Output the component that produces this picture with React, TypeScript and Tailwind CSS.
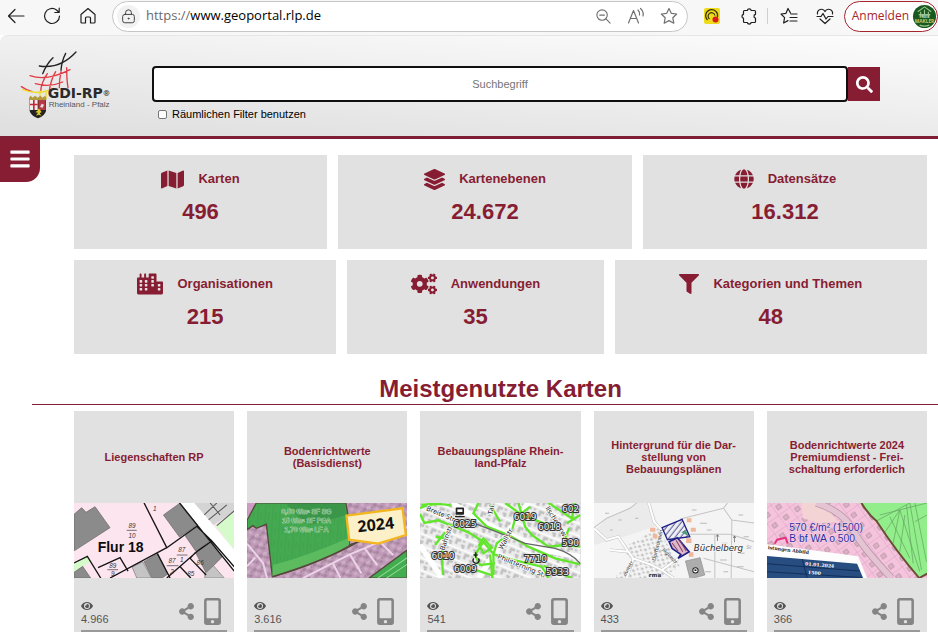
import React from 'react';
import {
  FaBars,
  FaCity,
  FaCogs,
  FaEye,
  FaFilter,
  FaGlobe,
  FaLayerGroup,
  FaMap,
  FaMobileAlt,
  FaSearch,
  FaShareAlt,
} from 'react-icons/fa';

interface Stat {
  label: string;
  value: string;
  icon: React.ReactNode;
  grow: string;
}

interface MapCardProps {
  title: React.ReactNode;
  views: string;
  preview: React.ReactNode;
}

const statRows: Stat[][] = [
  [
    { label: 'Karten', value: '496', icon: <FaMap size={23} />, grow: 'flex-[253]' },
    { label: 'Kartenebenen', value: '24.672', icon: <FaLayerGroup size={21} />, grow: 'flex-[294]' },
    { label: 'Datensätze', value: '16.312', icon: <FaGlobe size={20} />, grow: 'flex-[284]' },
  ],
  [
    { label: 'Organisationen', value: '215', icon: <FaCity size={26} />, grow: 'flex-[262]' },
    { label: 'Anwendungen', value: '35', icon: <FaCogs size={26} />, grow: 'flex-[256]' },
    { label: 'Kategorien und Themen', value: '48', icon: <FaFilter size={20} />, grow: 'flex-[312]' },
  ],
];

const ToolIcon: React.FC<{ children: React.ReactNode; size?: number }> = ({ children, size = 18 }) => (
  <svg
    width={size}
    height={size}
    viewBox="0 0 18 18"
    fill="none"
    stroke="currentColor"
    strokeWidth="1.2"
    strokeLinecap="round"
    strokeLinejoin="round"
  >
    {children}
  </svg>
);

const Avatar = () => (
  <svg width="25" height="25" viewBox="0 0 26 26" className="shrink-0">
    <circle cx="13" cy="13" r="12" fill="#17591f" />
    <path
      d="M6 8 L13 3 L20 8 M7 11 H19 M9 8 V11 M13 6 V11 M17 8 V11 M8 22 Q13 24 18 22"
      stroke="#9cc58e"
      strokeWidth="1.2"
      fill="none"
    />
    <text x="13" y="15" fontSize="4" fontWeight="bold" textAnchor="middle" fill="#d5e5c4">
      FREIE
    </text>
    <text x="13" y="20" fontSize="5" fontWeight="bold" textAnchor="middle" fill="#c8c86a">
      MAKLER
    </text>
  </svg>
);

const BrowserBar = () => (
  <div className="flex h-[35px] items-center bg-[#f7f7f7] pb-[3px] pl-[7px] font-['Open_Sans',sans-serif] text-[#1f1f1f]">
    <div className="flex items-center gap-[18px]">
      <button aria-label="Zurück">
        <ToolIcon>
          <path d="M17 9 H1.5 M8 2.5 L1.5 9 L8 15.5" />
        </ToolIcon>
      </button>
      <button aria-label="Aktualisieren">
        <ToolIcon>
          <path d="M16.5 9 A7.5 7.5 0 1 1 13.5 3 L16 5.3 M16.2 1.2 V5.5 H11.8" />
        </ToolIcon>
      </button>
      <button aria-label="Startseite">
        <ToolIcon>
          <path d="M2 7.5 L9 1.5 L16 7.5 V15 Q16 16 15 16 H11.5 V11 Q11.5 10 10.5 10 H7.5 Q6.5 10 6.5 11 V16 H3 Q2 16 2 15 Z" />
        </ToolIcon>
      </button>
    </div>
    <div className="ml-[15px] mr-4 flex h-[31px] flex-1 items-center rounded-full border border-[#c6c6c6] bg-white pl-1 pr-[9px]">
      <span className="flex size-[23px] items-center justify-center rounded-full bg-[#f2f2f2] text-[#444]">
        <ToolIcon size={15}>
          <rect x="2" y="6.5" width="14" height="10" rx="2.5" />
          <path d="M5.5 6.5 V4.5 A3.5 3.5 0 0 1 12.5 4.5 V6.5" />
          <circle cx="9" cy="11.5" r="0.6" fill="currentColor" />
        </ToolIcon>
      </span>
      <label htmlFor="address" className="ml-[6px] text-[13px] text-[#6b6b6b]">
        https://
      </label>
      <input id="address" className="min-w-0 flex-1 text-[13px] text-black outline-none" defaultValue="www.geoportal.rlp.de" />
      <div className="flex items-center gap-[15px] text-[#707070]">
        <button aria-label="Zoom">
          <ToolIcon size={17}>
            <circle cx="7.5" cy="7.5" r="5.5" />
            <path d="M11.6 11.6 L16 16 M5 7.5 H10" />
          </ToolIcon>
        </button>
        <button aria-label="Laut vorlesen">
          <ToolIcon>
            <path d="M1.5 16 L6.5 3.5 L11.5 16 M3.3 11.5 H9.7 M11 3 Q13 5 12.5 8 M13.5 1.5 Q17 4.5 16 9" />
          </ToolIcon>
        </button>
        <button aria-label="Favorit hinzufügen">
          <ToolIcon>
            <path d="M9 1.5 L11.3 6.3 L16.7 7 L12.8 10.8 L13.8 16.2 L9 13.6 L4.2 16.2 L5.2 10.8 L1.3 7 L6.7 6.3 Z" />
          </ToolIcon>
        </button>
      </div>
    </div>
    <button aria-label="Erweiterung">
      <svg width="16" height="16" viewBox="0 0 16 16">
        <rect width="16" height="16" rx="2" fill="#eedb1c" />
        <path
          d="M3.5 12 A6 6 0 1 1 13.5 9 M5.5 11 A3.5 3.5 0 1 1 11 7.5"
          stroke="#3d3510"
          strokeWidth="1.2"
          fill="none"
        />
        <circle cx="11.5" cy="11.5" r="3" fill="#d91b1b" />
      </svg>
    </button>
    <button aria-label="Erweiterungen" className="ml-5">
      <ToolIcon>
        <path d="M4.5 3.5 H7.3 A2 2 0 0 1 11.2 3.5 H14.5 Q15.5 3.5 15.5 4.5 V7.3 A2 2 0 0 0 15.5 11.2 V14.5 Q15.5 15.5 14.5 15.5 H11.2 A2 2 0 0 1 7.3 15.5 H4.5 Q3.5 15.5 3.5 14.5 V11.2 A2 2 0 0 1 3.5 7.3 V4.5 Q3.5 3.5 4.5 3.5 Z" />
      </ToolIcon>
    </button>
    <span className="ml-[9px] h-4 w-px bg-[#cfcfcf]" />
    <button aria-label="Favoriten" className="ml-3">
      <ToolIcon>
        <path d="M10.5 6 L8 1.5 L6 6.3 L1 7 L4.6 10.6 L3.6 16 L8 13.6 M11 7 H17 M10 10.5 H17 M10 14 H17" />
      </ToolIcon>
    </button>
    <button aria-label="Browser-Essentials" className="ml-[18px]">
      <ToolIcon>
        <path d="M1.5 7 A4 4 0 0 1 9 4.5 A4 4 0 0 1 16.5 7 M1 9.5 H5 L7 6.5 L10 12 L12 9.5 H17 M4 12 L9 16.5 L14 12" />
      </ToolIcon>
    </button>
    <button className="ml-[10px] flex h-[31px] items-center gap-[3px] rounded-full border border-[#a4262c] bg-white pl-[7px] text-xs text-[#a4262c]">
      Anmelden
      <Avatar />
    </button>
  </div>
);

const Logo = () => (
  <svg width="92" height="69" viewBox="30 20 276 207" className="shrink-0">
    <g fill="none" strokeWidth="4" strokeLinecap="round">
      <path d="M88 65 Q150 75 198 23" stroke="#222" />
      <path d="M129 40 Q110 58 98 88 M167 27 Q155 50 153 78" stroke="#222" />
      <path
        d="M60 94 Q110 112 180 76 M76 118 Q120 130 158 113 M34 127 Q50 138 66 142 M112 88 Q94 115 92 140 M137 82 Q123 105 118 138 M153 82 Q148 105 148 130 M170 70 Q170 105 174 130"
        stroke="#e23b45"
        strokeWidth="4"
      />
      <path d="M38 136 Q80 152 115 138 M90 140 V158 M108 140 V160" stroke="#f0dd28" />
    </g>
    <path d="M57 160 L62 154 L68 160 L75 154 L83 160 L91 154 L98 160 L105 154 L109 160 V167 H57 Z" fill="#b59b3a" />
    <path d="M59 167 H108 V200 Q104 215 84 222 Q63 215 59 200 Z" fill="#222" />
    <path d="M60 167 H83 V197 H60 Z" fill="#efefef" />
    <path d="M69 167 H74 V197 H69 Z M60 178 H83 V183 H60 Z" fill="#c52634" />
    <path d="M85 167 H107 V197 H85 Z" fill="#b63a45" />
    <path d="M90 188 L95 178 L102 181 L98 190 Z" fill="#ddd" />
    <path d="M78 214 L84 205 L76 204 L84 198 L82 192 L90 196 L95 204 L89 206 L94 214 L86 211 Z" fill="#dfca2e" />
    <text x="113" y="161" fontSize="42" fontWeight="bold" fill="#2b2a28" fontFamily="DejaVu Sans, sans-serif">
      GDI-RP
    </text>
    <text x="280" y="154" fontSize="23" fontWeight="bold" fill="#2b2a28" fontFamily="Noto Sans, sans-serif">
      ®
    </text>
    <text x="116" y="189" fontSize="24" fill="#55565a" fontFamily="Liberation Sans, sans-serif">
      Rheinland - Pfalz
    </text>
  </svg>
);

const Header = () => (
  <header className="flex h-[104px] rounded-tl-lg border-b-[3px] border-t border-b-[#7f1f36] border-t-[#e6e6e6] bg-[linear-gradient(184deg,#fdfdfd,#dedede)] pl-5 pr-[58px]">
    <div className="pt-[15px]">
      <Logo />
    </div>
    <form className="ml-10 flex-1 pt-[30px]">
      <div className="flex items-center">
        <input
          type="text"
          aria-label="Suchbegriff"
          placeholder="Suchbegriff"
          className="h-9 min-w-0 flex-1 rounded-sm border-2 border-[#101010] bg-white text-center text-[11px] outline-none placeholder:text-[#757575]"
        />
        <button type="button" aria-label="Suchen" className="flex h-[34px] w-8 items-center justify-center bg-[#871d33] text-white">
          <FaSearch size={17} />
        </button>
      </div>
      <label className="mt-1 flex items-center gap-[5px] pl-[6px] text-[11px] leading-4 text-black">
        <input type="checkbox" className="size-[9px] appearance-none rounded-xs border border-[#767676] bg-white" />
        Räumlichen Filter benutzen
      </label>
    </form>
  </header>
);

const StatTile: React.FC<Stat> = ({ label, value, icon, grow }) => (
  <a href="#" className={`${grow} h-[94px] bg-[#e1e1e1] pt-3 text-center font-bold text-[#871d33]`}>
    <span className="flex h-6 items-center justify-center gap-[14px] text-[13px]">
      {icon}
      {label}
    </span>
    <span className="mt-[7px] block text-[22px] leading-7">{value}</span>
  </a>
);

/* Cadastral parcels with buildings */
const ParcelMap = () => (
  <svg viewBox="12 24 480 225" preserveAspectRatio="xMidYMid slice" className="block h-[75px] w-full">
    <rect x="12" y="24" width="480" height="225" fill="#fde5ef" />
    <path d="M12 205 L52 184 L64 198 L12 232 Z M436 92 L492 50 V165 Z" fill="#d5fbcb" />
    <path d="M372 24 H492 V50 L430 90 Z" fill="#d4d4d4" />
    <path d="M400 62 L440 24 M415 75 L470 30 M440 92 L492 48 M420 24 L450 60" stroke="#555" strokeWidth="3" />
    <path d="M328 24 H372 L492 165 V228 Z" fill="#fff" />
    <g fill="#8b8b8b" stroke="#666" strokeWidth="2">
      <path d="M12 58 L35 38 L48 52 L75 35 L120 98 L15 166 H12 Z" />
      <path d="M280 60 L330 24 L382 90 L328 126 Z" />
      <path d="M345 122 L382 94 L418 138 L378 170 Z" />
      <path d="M376 172 L420 140 L456 186 L408 234 Z" />
      <path d="M222 200 L262 176 L292 238 L276 249 H246 Z" />
      <path d="M12 232 L38 214 L62 249 H12 Z" />
    </g>
    <path d="M186 216 L218 200 L244 249 H200 Z M404 236 L430 212 L462 249 H404 Z" fill="#c4c4c4" stroke="#777" strokeWidth="2" />
    <path
      d="M222 24 L290 158 L380 94 M120 249 L290 158 M328 24 L492 228 M12 204 L52 184 L92 249 M84 218 L150 188 L174 228 M262 176 L300 249 M290 249 L385 166 L425 138 M360 190 L408 240 M330 215 L362 249 M376 172 L360 190 M380 94 L425 138 L492 215"
      stroke="#161616"
      strokeWidth="4"
      fill="none"
    />
    <g fontFamily="Liberation Sans, sans-serif" fontStyle="italic" fontSize="19" fill="#333" textAnchor="middle">
      <text x="186" y="100">89</text>
      <text x="186" y="130">10</text>
      <text x="128" y="218">89</text>
      <text x="128" y="244">9</text>
      <text x="335" y="172">87</text>
      <text x="335" y="202">1</text>
      <text x="306" y="205">87</text>
      <text x="306" y="236">2</text>
      <text x="390" y="210">86</text>
      <text x="362" y="242">85</text>
      <text x="254" y="47">1</text>
      <path d="M170 106 H200 M112 224 H144 M320 180 H352 M290 212 H325" stroke="#333" strokeWidth="2" />
    </g>
    <text x="83" y="171" fontFamily="Liberation Sans, sans-serif" fontWeight="bold" fontSize="42" fill="#0c0c0c">
      Flur 18
    </text>
  </svg>
);

/* Aerial view with land value zones */
const LandValueMap = () => (
  <svg viewBox="12 24 480 225" preserveAspectRatio="xMidYMid slice" className="block h-[75px] w-full">
    <defs>
      <pattern id="roofs" width="34" height="30" patternUnits="userSpaceOnUse" patternTransform="rotate(-24)">
        <rect width="34" height="30" fill="#c09ab8" />
        <path d="M3 4 H14 V13 H3 Z M20 17 H30 V25 H20 Z" fill="#a884a0" />
        <path d="M17 3 H29 V11 H17 Z M4 18 H13 V27 H4 Z" fill="#cdaec6" />
        <path d="M15 14 H19 V19 H15 Z M30 8 H34 V14 H30 Z" fill="#958a93" />
      </pattern>
      <pattern id="meadow" width="22" height="40" patternUnits="userSpaceOnUse" patternTransform="rotate(4)">
        <rect width="22" height="40" fill="#44a950" />
        <path d="M5 0 V40 M15 8 V30" stroke="#40a24d" strokeWidth="3" />
      </pattern>
    </defs>
    <rect x="12" y="24" width="480" height="225" fill="url(#roofs)" />
    <path
      d="M40 24 H308 L318 80 L318 150 Q240 200 88 245 L76 140 L70 88 L40 100 L30 92 L12 104 V76 Z"
      fill="url(#meadow)"
      stroke="#57483c"
      strokeWidth="4"
    />
    <path d="M90 210 Q200 180 318 128 V150 Q240 200 88 245 Z" fill="#5cba5f" />
    <path d="M130 26 H304 L310 60 L200 90 L160 60 Z" fill="#358b46" opacity="0.6" />
    <path d="M12 24 H36 L14 62 Z" fill="#cd9cc2" />
    <path d="M378 249 L492 165 V249 Z" fill="#42ad50" stroke="#57483c" strokeWidth="4" />
    <path d="M404 249 L492 188 M430 249 L492 208" stroke="#97db95" strokeWidth="3" />
    <path
      d="M12 146 L60 204 L72 249 M36 188 L12 214 M180 249 L320 178 L420 136 L492 96 M320 178 L355 235 M365 160 L402 210 M410 140 L450 180 M270 206 L292 249"
      stroke="#ecd3e8"
      strokeWidth="6"
      fill="none"
    />
    <path d="M318 150 L360 136 M88 245 Q240 200 345 140" stroke="#57483c" strokeWidth="5" fill="none" />
    <g
      fontFamily="Liberation Sans, sans-serif"
      fontSize="20"
      fill="#3c9b4c"
      stroke="#cfe6cf"
      strokeWidth="2"
      paintOrder="stroke"
      textAnchor="middle"
    >
      <text x="190" y="58">0,50 €/m² SF SG</text>
      <text x="190" y="84">15 €/m² SF PGA</text>
      <text x="190" y="112">1,70 €/m² LF A</text>
    </g>
    <path d="M310 62 L478 40 L488 120 L405 146 L318 134 Z" fill="#fcf0c8" stroke="#f3b61f" strokeWidth="7" />
    <text
      x="398"
      y="106"
      transform="rotate(-6 398 92)"
      fontFamily="Open Sans, sans-serif"
      fontWeight="bold"
      fontSize="48"
      textAnchor="middle"
      fill="#111"
    >
      2024
    </text>
  </svg>
);

/* City plan with plan outlines in green */
const CityPlanMap = () => (
  <svg viewBox="15 24 480 225" preserveAspectRatio="xMidYMid slice" className="block h-[75px] w-full">
    <defs>
      <pattern id="blocks" width="40" height="34" patternUnits="userSpaceOnUse" patternTransform="rotate(22)">
        <rect width="40" height="34" fill="#ededed" />
        <path d="M4 4 H20 V12 H12 V22 H4 Z M24 16 H36 V29 H28 V23 H24 Z M25 4 H33 V10 H25 Z" fill="#c0c0c0" />
        <path d="M0 32 H40" stroke="#fff" strokeWidth="4" />
      </pattern>
    </defs>
    <rect x="15" y="24" width="480" height="225" fill="url(#blocks)" />
    <path d="M110 24 L240 100 L380 165 L495 185 M15 150 L80 249 M190 249 L300 80 L340 24" stroke="#fff" strokeWidth="16" fill="none" />
    <g fill="none" stroke="#62e62c" strokeWidth="7">
      <path d="M15 56 L28 84 L70 76 L120 96 L160 112 L205 140 L236 178 L300 196 L380 215 L400 249" />
      <path d="M20 30 L80 24 M190 24 L175 55 L215 95 L280 120 L340 155 L420 190 L495 208" />
      <path d="M310 24 L330 95 L350 120 L400 155 L450 150 L495 155 M235 178 L245 145 L290 110 L300 70 L345 35" />
      <path d="M62 125 L90 130 L80 180 L84 240 M60 150 L90 112 M205 140 L180 180 L195 210 L240 205 M235 178 V240 M150 215 L230 240" />
      <path d="M400 24 L470 70 L480 24 M455 85 L495 60 M225 30 L255 80 M462 100 L440 150 M385 212 L470 249" />
      <path d="M205 130 L230 158 L205 175 L192 150 Z M15 40 Q50 20 110 32 M270 24 L320 60 L400 90 M225 178 L232 249" />
    </g>
    <path d="M180 86 Q250 112 330 145 L420 160 Q470 175 495 205" stroke="#666" strokeWidth="4" fill="none" />
    <rect x="122" y="38" width="25" height="21" rx="3" fill="#222" />
    <path d="M127 43 H142 V51 H127 Z" fill="#fff" />
    <path d="M120 65 H149" stroke="#222" strokeWidth="4" />
    <path d="M182 172 V188 M176 190 A9 9 0 1 0 190 190 M175 180 H188" stroke="#222" strokeWidth="4" fill="none" />
    <g fontFamily="Noto Sans, sans-serif" fontSize="21" fill="#222" stroke="#fff" strokeWidth="4" paintOrder="stroke">
      <text x="32" y="46" transform="rotate(22 32 46)">Breite Str.</text>
      <text x="88" y="168" transform="rotate(-72 88 168)">Bahnstr.</text>
      <text x="246" y="190" transform="rotate(22 246 190)">Philitterning St.</text>
      <text x="262" y="165" transform="rotate(-62 262 165)">Wallstr.</text>
      <text x="390" y="40" transform="rotate(58 390 40)">llschererw.</text>
      <text x="232" y="60" transform="rotate(-78 232 60)">Tal</text>
    </g>
    <g
      fontFamily="DejaVu Sans, sans-serif"
      fontSize="27"
      fill="#f2f2f2"
      stroke="#333"
      strokeWidth="6"
      paintOrder="stroke"
      textAnchor="middle"
    >
      <text x="150" y="96">6025</text>
      <text x="330" y="76">6019</text>
      <text x="403" y="106">6018</text>
      <text x="84" y="191">6010</text>
      <text x="151" y="232">6009</text>
      <text x="361" y="202">7710</text>
      <text x="427" y="240">5933</text>
      <text x="466" y="50">602</text>
      <text x="466" y="153">590</text>
    </g>
  </svg>
);

/* Village plan with hatched plan areas */
const VillageMap = () => (
  <svg viewBox="12 24 480 225" preserveAspectRatio="xMidYMid slice" className="block h-[75px] w-full">
    <defs>
      <pattern id="hatch" width="13" height="13" patternUnits="userSpaceOnUse" patternTransform="rotate(38)">
        <rect width="13" height="13" fill="#eeeef5" />
        <path d="M6 0 V13" stroke="#54548f" strokeWidth="3" />
      </pattern>
      <pattern id="houses" width="20" height="18" patternUnits="userSpaceOnUse" patternTransform="rotate(30)">
        <path d="M2 2 H10 V9 H2 Z M12 10 H18 V16 H12 Z" fill="#c2c2c2" />
      </pattern>
    </defs>
    <rect x="12" y="24" width="480" height="225" fill="#f4f4f4" />
    <path d="M12 110 L45 75 L140 24 H180 L205 90 L120 120 L12 150 Z" fill="#ebebeb" />
    <path d="M95 160 L150 130 L205 100 L250 180 L270 215 L210 249 H70 L130 200 Z" fill="url(#houses)" />
    <g fill="none" stroke="#c2c2c2" strokeWidth="9">
      <path d="M176 24 L192 80 L215 105 M12 100 L50 135 L85 125 L115 170 L130 190 L185 210 L215 225 L265 190 M130 190 L110 249 M215 225 L250 249 M60 165 L115 170" />
    </g>
    <g fill="none" stroke="#fff" strokeWidth="6">
      <path d="M176 24 L192 80 L215 105 M12 100 L50 135 L85 125 L115 170 L130 190 L185 210 L215 225 L265 190 M130 190 L110 249 M215 225 L250 249 M60 165 L115 170" />
    </g>
    <path
      d="M12 98 L50 70 L120 40 L140 24 M270 72 L400 40 L425 75 L492 84 M400 40 L412 24 M425 75 L423 249 M300 118 H420 L492 140 M374 118 V249 M340 190 L492 230"
      stroke="#c4c4c4"
      strokeWidth="3"
      fill="none"
    />
    <path
      d="M45 55 h12 M85 75 h10 M135 70 h10 M60 105 h8 M330 85 h20 M350 105 h14 M445 60 h14 M395 145 h16 M445 175 h18 M390 195 h20 M440 215 h20 M345 230 h18 M460 125 h16 M400 230 h14 M305 45 h14"
      stroke="#b9b9b9"
      strokeWidth="3"
    />
    <path d="M382 138 V120 M378 125 L382 119 L386 125 M433 142 V124 M429 129 L433 123 L437 129" stroke="#555" strokeWidth="2" fill="none" />
    <g fill="#efb79b">
      <path d="M180 98 h16 v12 h-16 Z M188 118 h14 v12 h-14 Z M290 70 h14 v12 h-14 Z M302 98 h15 v12 h-15 Z M288 130 h16 v14 h-16 Z M296 172 h14 v13 h-14 Z" />
    </g>
    <path d="M216 98 L276 73 L299 125 L232 134 Z" fill="url(#hatch)" stroke="#1f1f86" strokeWidth="4" />
    <path d="M274 112 L286 104 L296 124 Z" fill="#4f9a78" />
    <path d="M237 140 L262 128 L297 170 L264 190 L272 178 L246 160 Z" fill="#ddbac9" stroke="#1f1f86" strokeWidth="5" />
    <path d="M246 144 L264 168 M258 136 L278 170 M268 134 L288 168" stroke="#8a3e6b" strokeWidth="3" />
    <path d="M286 198 L330 188 L344 240 L300 252 Z" fill="#adadad" stroke="#8c8c8c" strokeWidth="2" />
    <circle cx="316" cy="226" r="8" fill="#fff" stroke="#222" strokeWidth="3" />
    <path d="M313 223 h6 v5 h-6 Z" fill="#222" />
    <g fontFamily="DejaVu Sans, sans-serif" fontSize="15" fill="#444">
      <text x="196" y="198" transform="rotate(-76 196 198)">Dorfbrunnen</text>
      <text x="216" y="164" transform="rotate(48 216 164)">Jägerstr.</text>
      <text x="108" y="245" transform="rotate(-62 108 245)">mmstr</text>
    </g>
    <text x="176" y="247" fontFamily="DejaVu Sans, sans-serif" fontSize="17" fontWeight="bold" fill="#333">
      rma
    </text>
    <text
      x="311"
      y="169"
      fontFamily="DejaVu Sans, sans-serif"
      fontStyle="italic"
      fontSize="26"
      fill="#2d2d2d"
      stroke="#f7f7f7"
      strokeWidth="4"
      paintOrder="stroke"
    >
      Büchelberg
    </text>
    <text x="468" y="162" fontFamily="DejaVu Sans, sans-serif" fontStyle="italic" fontSize="15" fill="#999">
      Sc
    </text>
  </svg>
);

/* Premium land value map with info table */
const PremiumMap = () => (
  <svg viewBox="12 24 480 225" preserveAspectRatio="xMidYMid slice" className="block h-[75px] w-full">
    <defs>
      <pattern id="lots" width="42" height="38" patternUnits="userSpaceOnUse" patternTransform="rotate(-36)">
        <rect width="42" height="38" fill="#f6c3dd" />
        <path d="M0 0 H42 M0 0 V38" stroke="#c698b0" strokeWidth="2" />
        <path d="M10 12 H24 V25 H10 Z" fill="#dcb0c5" stroke="#b391a2" strokeWidth="2" />
      </pattern>
    </defs>
    <rect x="12" y="24" width="480" height="225" fill="url(#lots)" />
    <path d="M115 24 H180 L225 80 L170 85 L120 70 Z" fill="#f3d3d3" />
    <path d="M160 24 Q240 50 270 105 T385 249" stroke="#bd9aad" strokeWidth="22" fill="none" />
    <path d="M160 24 Q240 50 270 105 T385 249" stroke="#e4c3d2" strokeWidth="17" fill="none" />
    <path d="M290 24 H492 V236 L468 249 Q400 165 335 75 Z" fill="#92ee8a" />
    <path
      d="M340 78 L440 24 M365 112 L410 45 L470 230 M390 145 L410 45 M430 30 L450 205 M440 24 L475 225 M455 24 L490 200 M350 60 L492 24 M410 170 L425 60 M455 80 L492 60 M380 65 L440 190"
      stroke="#619e61"
      strokeWidth="2"
      fill="none"
    />
    <path d="M295 24 Q315 58 340 78 Q400 170 468 249 L492 236" stroke="#6b4c35" strokeWidth="6" fill="none" />
    <path d="M35 146 L42 134 L68 128 L74 146" stroke="#e63380" strokeWidth="6" fill="none" />
    <path d="M12 148 L285 184 L312 249 H12 Z" fill="#fdfdfd" />
    <path d="M12 183 L282 206 L300 249 H12 Z" fill="#284d80" />
    <path d="M12 206 L290 228 M12 230 L296 247 M118 192 L132 249" stroke="#13305b" strokeWidth="3" />
    <g fontFamily="DejaVu Serif, serif" fontWeight="bold" fontSize="14">
      <text x="14" y="162" transform="rotate(7 14 162)" fill="#222">
        istungen Abbild
      </text>
      <text x="126" y="211" transform="rotate(5 126 211)" fill="#fff">
        01.01.2024
      </text>
      <text x="134" y="237" transform="rotate(5 134 237)" fill="#fff">
        1500
      </text>
    </g>
    <g
      fontFamily="Liberation Sans, sans-serif"
      fontSize="31"
      fill="#2d2da2"
      stroke="#f6d9ea"
      strokeWidth="3"
      paintOrder="stroke"
    >
      <text x="79" y="108">570 €/m² (1500)</text>
      <text x="79" y="140">B bf WA o 500</text>
    </g>
  </svg>
);

const MapCard: React.FC<MapCardProps> = ({ title, views, preview }) => (
  <article className="bg-[#e1e1e1]">
    <h3 className="flex h-[92px] items-center justify-center text-center text-[11px] font-bold leading-3 text-[#871d33]">
      <span>{title}</span>
    </h3>
    {preview}
    <div className="mx-[7px] flex h-[54px] items-end justify-between border-b-2 border-[#999] pb-[5px] text-[#555]">
      <div className="text-[11px] leading-3">
        <FaEye size={12} className="mb-[1px]" />
        {views}
      </div>
      <div className="flex items-center gap-[9px] pr-[6px] text-[#858585]">
        <button aria-label="Teilen">
          <FaShareAlt size={17} />
        </button>
        <button aria-label="Mobile Ansicht">
          <FaMobileAlt className="h-[27px] w-[17px]" />
        </button>
      </div>
    </div>
  </article>
);

const App = () => {
  return (
    <div className="min-h-screen bg-white font-['Liberation_Sans',Arial,sans-serif]">
      <BrowserBar />
      <Header />
      <main className="relative pl-8 pt-4">
        <button
          aria-label="Menü"
          className="absolute left-0 top-0 flex h-[43px] w-10 items-center justify-center rounded-br-[14px] bg-[#871d33] pb-1 text-white"
        >
          <FaBars size={22} />
        </button>
        <section className="flex flex-col gap-[11px] pl-[42px] pr-[11px]">
          {statRows.map((row, i) => (
            <div key={i} className="flex gap-[11px]">
              {row.map((stat) => (
                <StatTile key={stat.label} {...stat} />
              ))}
            </div>
          ))}
        </section>
        <h2 className="mt-5 border-b border-[#7f1f36] pl-[42px] pr-[11px] text-center text-2xl font-bold leading-[30px] text-[#871d33]">
          Meistgenutzte Karten
        </h2>
        <section className="mt-[6px] grid grid-cols-5 gap-[13px] pl-[42px] pr-[11px]">
          <MapCard title="Liegenschaften RP" views="4.966" preview={<ParcelMap />} />
          <MapCard
            title={
              <>
                Bodenrichtwerte
                <br />
                (Basisdienst)
              </>
            }
            views="3.616"
            preview={<LandValueMap />}
          />
          <MapCard
            title={
              <>
                Bebauungspläne Rhein-
                <br />
                land-Pfalz
              </>
            }
            views="541"
            preview={<CityPlanMap />}
          />
          <MapCard
            title={
              <>
                Hintergrund für die Dar-
                <br />
                stellung von
                <br />
                Bebauungsplänen
              </>
            }
            views="433"
            preview={<VillageMap />}
          />
          <MapCard
            title={
              <>
                Bodenrichtwerte 2024
                <br />
                Premiumdienst - Frei-
                <br />
                schaltung erforderlich
              </>
            }
            views="366"
            preview={<PremiumMap />}
          />
        </section>
      </main>
    </div>
  );
};

export default App;
